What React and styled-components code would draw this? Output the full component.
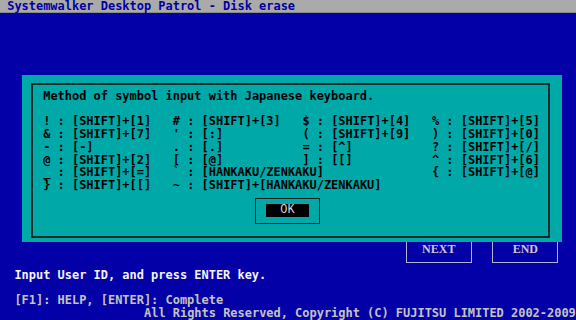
import styled, { createGlobalStyle } from 'styled-components'

const COL = 7.2
const ROW = 12.8

const GlobalStyle = createGlobalStyle`
  html, body {
    margin: 0;
    padding: 0;
    background: #0400a8;
  }
`

const symbols = [
  [['!', '[SHIFT]+[1]'], ['#', '[SHIFT]+[3]'], ['$', '[SHIFT]+[4]'], ['%', '[SHIFT]+[5]']],
  [['&', '[SHIFT]+[7]'], ["'", '[:]'], ['(', '[SHIFT]+[9]'], [')', '[SHIFT]+[0]']],
  [['-', '[-]'], ['.', '[.]'], ['=', '[^]'], ['?', '[SHIFT]+[/]']],
  [['@', '[SHIFT]+[2]'], ['[', '[@]'], [']', '[[]'], ['^', '[SHIFT]+[6]']],
  [['_', '[SHIFT]+[=]'], ['`', '[HANKAKU/ZENKAKU]'], null, ['{', '[SHIFT]+[@]']],
  [['}', '[SHIFT]+[[]'], ['~', '[SHIFT]+[HANKAKU/ZENKAKU]'], null, null],
]

export default function App() {
  return (
    <>
      <GlobalStyle />
      <Screen>
        <TitleBar>Systemwalker Desktop Patrol - Disk erase</TitleBar>
        <Main>
          <ButtonRow>
            <ScreenButton>NEXT</ScreenButton>
            <ScreenButton>END</ScreenButton>
          </ButtonRow>
          <Line $bright>Input User ID, and press ENTER key.</Line>
          <Line $gap>[F1]: HELP, [ENTER]: Complete</Line>
          <Line $indent={20}>All Rights Reserved, Copyright (C) FUJITSU LIMITED 2002-2009</Line>
        </Main>

        <Dialog>
          <Frame>
            <DialogText>Method of symbol input with Japanese keyboard.</DialogText>
            <SymbolGrid>
              {symbols.map((row, r) =>
                row.map((cell, c) => (
                  <SymbolCell key={`${r}-${c}`}>
                    {cell ? `${cell[0]} : ${cell[1]}` : ''}
                  </SymbolCell>
                ))
              )}
            </SymbolGrid>
            <OkFrame>
              <OkButton>OK</OkButton>
            </OkFrame>
          </Frame>
        </Dialog>
      </Screen>
    </>
  )
}

const Screen = styled.div`
  position: relative;
  width: 576px;
  height: 320px;
  overflow: hidden;
  background: #0400a8;
  font-family: 'DejaVu Sans Mono', 'Liberation Mono', monospace;
  font-size: 11.96px;
  font-weight: bold;
  line-height: ${ROW}px;
  white-space: pre;
`

const TitleBar = styled.div`
  height: 12px;
  border-bottom: 1px solid #8c8c8c;
  background: #aaaaaa;
  color: #0000a0;
  padding-left: ${COL}px;
  line-height: 12px;
`

const Main = styled.div`
  display: flex;
  flex-direction: column;
`

const ButtonRow = styled.div`
  display: flex;
  justify-content: flex-end;
  gap: 20.6px;
  margin-top: 224px;
  padding-right: 17.7px;
`

const ScreenButton = styled.div`
  width: 66px;
  height: 25.5px;
  box-sizing: border-box;
  border: 1.5px solid #b4b4d0;
  color: #c8c8d8;
  font-family: 'Liberation Serif', serif;
  font-size: 12px;
  display: flex;
  align-items: center;
  justify-content: center;
  padding-top: 0;
`

const Line = styled.div`
  height: ${ROW}px;
  padding-left: ${(p) => (p.$indent ?? 2) * COL}px;
  margin-top: ${(p) => (p.$bright ? 6.3 : p.$gap ? ROW : 0)}px;
  color: ${(p) => (p.$bright ? '#f4f4f4' : '#c4c4c0')};
`

const Dialog = styled.div`
  position: absolute;
  left: 21.6px;
  top: 75px;
  width: 540.5px;
  height: 167px;
  box-sizing: border-box;
  background: #00a8a8;
  padding: 8px 12px 4px 9.5px;
`

const Frame = styled.div`
  height: 100%;
  box-sizing: border-box;
  border: 2px solid #0c2c2c;
  padding: 4.6px 0 0 10.1px;
  color: #000;
`

const DialogText = styled.div`
  height: ${ROW}px;
`

const SymbolGrid = styled.div`
  display: grid;
  grid-template-columns: repeat(4, ${COL * 18}px);
  grid-auto-rows: ${ROW}px;
  margin-top: ${ROW}px;
`

const SymbolCell = styled.div`
  overflow: visible;
`

const OkFrame = styled.div`
  width: 65px;
  height: 26px;
  box-sizing: border-box;
  border: 1.5px solid #0c2020;
  margin: 6px 0 0 211.8px;
  display: flex;
  align-items: center;
  justify-content: center;
`

const OkButton = styled.div`
  width: ${COL * 6}px;
  height: 13px;
  background: #000;
  color: #d8d8d8;
  text-align: center;
  line-height: 13px;
  font-family: 'Liberation Mono', monospace;
  font-weight: normal;
`
